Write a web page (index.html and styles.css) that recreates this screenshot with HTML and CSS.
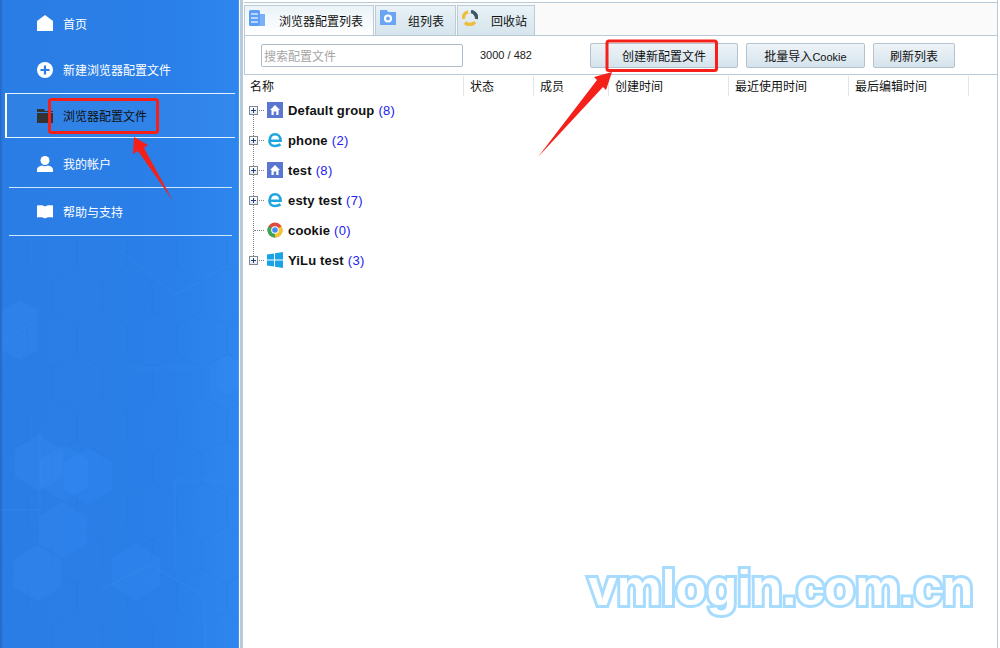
FILE: index.html
```html
<!DOCTYPE html>
<html>
<head>
    <title>VMLogin</title>
    <link rel="stylesheet" href="styles.css">
</head>
<body>
    <div id="app">
        <div id="sidebar">
            <svg class="hexes" width="239" height="648" viewBox="0 0 239 648">
                <defs>
                    <pattern id="hexgrid" width="50" height="86" patternUnits="userSpaceOnUse" patternTransform="translate(2 10)">
                        <path d="M25 0 L50 14 V43 L25 57 L0 43 V14 Z M25 57 V86 M0 43 V43 M50 43 V43" fill="none" stroke="#1c6cd0" stroke-opacity="0.2"/>
                    </pattern>
                </defs>
                <rect x="0" y="240" width="239" height="408" fill="url(#hexgrid)"/>
                <g fill="#3b93f8" fill-opacity="0.2">
                    <polygon points="64,445 88,459 88,487 64,501 40,487 40,459"/>
                    <polygon points="88,448 112,462 112,490 88,504 64,490 64,462"/>
                    <polygon points="39,435 63,449 63,477 39,491 15,477 15,449"/>
                    <polygon points="63,502 87,516 87,544 63,558 39,544 39,516"/>
                    <polygon points="38,545 62,559 62,587 38,601 14,587 14,559"/>
                    <polygon points="136,544 160,558 160,586 136,600 112,586 112,558"/>
                    <polygon points="20,300 38,310 38,350 20,360 2,350 2,310"/>
                    <polygon points="228,355 239,361 239,389 228,395 216,389 216,361"/>
                </g>
                <g fill="none" stroke="#4a9cf8" stroke-opacity="0.22">
                    <path d="M120 250 L175 295 L230 265"/>
                    <path d="M130 368 H213 V395"/>
                    <path d="M100 590 L150 565 L205 597 V648"/>
                    <path d="M175 480 H235 M175 480 V570"/>
                    <path d="M5 340 L38 320" stroke-dasharray="6 4"/>
                    <path d="M40 430 V510 H0"/>
                </g>
            </svg>
            <ul class="nav">
                <li class="nav-item">
                    <svg class="nav-icon" viewBox="0 0 16 16"><path d="M8 0 L16 6 V16 H0 V6 Z" fill="#fff"/></svg>
                    首页
                </li>
                <li class="nav-item">
                    <svg class="nav-icon" viewBox="0 0 16 16"><circle cx="8" cy="8" r="8" fill="#fff"/><path d="M8 3.500 V12.500 M3.500 8 H12.500" stroke="#2a7fe6" stroke-width="2.200"/></svg>
                    新建浏览器配置文件
                </li>
                <li class="nav-item selected">
                    <svg class="nav-icon" viewBox="0 0 16 16"><path d="M0 1 H7 L8 3 H16 V4 H0 Z M0 5 H16 V15 H0 Z" fill="#333"/></svg>
                    浏览器配置文件
                </li>
                <li class="nav-item">
                    <svg class="nav-icon" viewBox="0 0 16 16"><circle cx="8" cy="4.500" r="4.500" fill="#fff"/><path d="M0 16 V13.500 C0 11 3 10 5 9.500 C7 10.500 9 10.500 11 9.500 C13 10 16 11 16 13.500 V16 Z" fill="#fff"/></svg>
                    我的帐户
                </li>
                <li class="nav-item">
                    <svg class="nav-icon" viewBox="0 0 16 16"><path d="M0 1.500 C3 1 6 1 8 2.500 C10 1 13 1 16 1.500 V13.500 C13 13 10 13 8 14.500 C6 13 3 13 0 13.500 Z" fill="#fff"/></svg>
                    帮助与支持
                </li>
            </ul>
        </div>

        <div id="main">
            <div class="tabs">
                <div class="tab active tab-w1">
                    <svg class="tab-icon" viewBox="0 0 16 16"><rect x="0" y="0" width="11" height="16" rx="1.500" fill="#5c9df5"/><rect x="11" y="4" width="5" height="12" fill="#7ab0f7"/><path d="M2 4 H9 M2 8 H9 M2 12 H9" stroke="#d8e8fc" stroke-width="1.300"/></svg>
                    <span>浏览器配置列表</span>
                </div>
                <div class="tab tab-w2">
                    <svg class="tab-icon" viewBox="0 0 16 16"><path d="M0 0 H7 L8 2 H16 V15 H0 Z" fill="#6aa5f3"/><circle cx="8" cy="8.500" r="3" fill="none" stroke="#fff" stroke-width="2.200"/></svg>
                    <span>组列表</span>
                </div>
                <div class="tab tab-w3">
                    <svg class="tab-icon" viewBox="0 0 16 16"><path d="M9 1.500 A6.500 6.500 0 0 1 14.500 9" fill="none" stroke="#3c5560" stroke-width="3.500"/><path d="M13 12 A6.500 6.500 0 0 1 3 12.500" fill="none" stroke="#eebd3c" stroke-width="3.500"/><path d="M1.500 9 A6.500 6.500 0 0 1 6 1.800" fill="none" stroke="#eebd3c" stroke-width="3.500"/></svg>
                    <span>回收站</span>
                </div>
            </div>

            <div class="toolbar">
                <input class="search" type="text" placeholder="搜索配置文件">
                <span class="count">3000 / 482</span>
                <button class="btn btn-create">创建新配置文件</button>
                <button class="btn btn-import">批量导入<span class="latin">Cookie</span></button>
                <button class="btn btn-refresh">刷新列表</button>
            </div>

            <div class="table-head">
                <div class="col col-name">名称</div>
                <div class="col col-status">状态</div>
                <div class="col col-member">成员</div>
                <div class="col col-time">创建时间</div>
                <div class="col col-time">最近使用时间</div>
                <div class="col col-time">最后编辑时间</div>
            </div>

            <div class="tree">
                <div class="row">
                    <span class="expander"></span>
                    <svg class="row-icon" viewBox="0 0 16 16"><rect width="16" height="16" fill="#5a77d0"/><path d="M8 3 L13 8 H11.500 V13 H9.300 V9.500 H6.700 V13 H4.500 V8 H3 Z" fill="#fff"/></svg>
                    <b>Default group</b><span class="num">(8)</span>
                </div>
                <div class="row">
                    <span class="expander"></span>
                    <svg class="row-icon" viewBox="0 0 16 16"><path d="M2.500 8.700 H13.600 C13.600 4.500 11 2.200 8 2.200 C5 2.200 2.800 4.500 2.500 8.700 C2.300 12 4.500 14 8 14 C10 14 12 13.400 13.500 12.400" fill="none" stroke="#1ea6e0" stroke-width="2.600"/></svg>
                    <b>phone</b><span class="num">(2)</span>
                </div>
                <div class="row">
                    <span class="expander"></span>
                    <svg class="row-icon" viewBox="0 0 16 16"><rect width="16" height="16" fill="#5a77d0"/><path d="M8 3 L13 8 H11.500 V13 H9.300 V9.500 H6.700 V13 H4.500 V8 H3 Z" fill="#fff"/></svg>
                    <b>test</b><span class="num">(8)</span>
                </div>
                <div class="row">
                    <span class="expander"></span>
                    <svg class="row-icon" viewBox="0 0 16 16"><path d="M2.500 8.700 H13.600 C13.600 4.500 11 2.200 8 2.200 C5 2.200 2.800 4.500 2.500 8.700 C2.300 12 4.500 14 8 14 C10 14 12 13.400 13.500 12.400" fill="none" stroke="#1ea6e0" stroke-width="2.600"/></svg>
                    <b>esty test</b><span class="num">(7)</span>
                </div>
                <div class="row">
                    <span class="no-expander"></span>
                    <svg class="row-icon" viewBox="0 0 16 16"><circle cx="8" cy="8" r="7.500" fill="#dd4b3e"/><path d="M8 8 L14.500 4.200 A7.500 7.500 0 0 1 8 15.500 Z" fill="#f5c431"/><path d="M8 8 L8 15.500 A7.500 7.500 0 0 1 1.500 4.200 Z" fill="#3aa757"/><circle cx="8" cy="8" r="3.800" fill="#fff"/><circle cx="8" cy="8" r="2.800" fill="#4a8af4"/></svg>
                    <b>cookie</b><span class="num">(0)</span>
                </div>
                <div class="row">
                    <span class="expander"></span>
                    <svg class="row-icon" viewBox="0 0 16 16"><path d="M0 2.500 L7 1.500 V7.500 H0 Z M8 1.300 L16 0 V7.500 H8 Z M0 8.500 H7 V14.500 L0 13.500 Z M8 8.500 H16 V16 L8 14.700 Z" fill="#18a3e4"/></svg>
                    <b>YiLu test</b><span class="num">(3)</span>
                </div>
            </div>

            <div class="watermark">vmlogin.com.cn</div>
        </div>
    </div>

    <svg class="marks" width="1000" height="648" viewBox="0 0 1000 648">
        <rect x="49.500" y="99.500" width="108" height="33" rx="2" fill="none" stroke="#f5201a" stroke-width="3"/>
        <rect x="607" y="41" width="109.500" height="29.500" rx="2" fill="none" stroke="#f5201a" stroke-width="3"/>
        <polygon points="134,137 148,145 144,148 173,201 138,151 133,154" fill="#f5201a"/>
        <polygon points="612,72 606,90 603,87 538,157 597,80 594,77" fill="#f5201a"/>
    </svg>
</body>
</html>
```

FILE: styles.css
```css
html, body {
    margin: 0;
    padding: 0;
    height: 100%;
    overflow: hidden;
}

body {
    font-family: "Noto Sans CJK SC", "Liberation Sans", sans-serif;
    font-size: 12px;
    color: #111;
    background: #fff;
}

#app {
    display: flex;
    height: 648px;
}

/* left menu */
#sidebar {
    position: relative;
    width: 239px;
    flex-shrink: 0;
    box-sizing: border-box;
    padding-left: 9px;
    background: linear-gradient(90deg, #2168c4 0, #2a7de4 3px, #2a7fe8 70%, #2d86ee 100%);
    border-right: 1px solid #3a96f5;
    color: #fff;
}

.hexes {
    position: absolute;
    left: 0;
    top: 0;
}

.nav {
    position: relative;
    list-style: none;
    margin: 0;
    padding: 0;
    width: 223px;
}

.nav-item {
    display: flex;
    align-items: center;
    gap: 10px;
    height: 47px;
    padding-left: 28px;
    border-bottom: 1px solid #cfe6ff;
}

.nav-item:nth-child(1) {
    height: 46px;
    border-bottom: none;
}

.nav-item:nth-child(2) {
    border-bottom: none;
}

.nav-icon {
    width: 16px;
    height: 16px;
}

.nav-item.selected {
    height: 43px;
    margin-left: -4px;
    margin-right: -3px;
    margin-bottom: 2px;
    padding-left: 30px;
    color: #111;
    background: rgba(255, 255, 255, 0.03);
    border-top: 1px solid #e4f1ff;
    border-bottom: 1px solid #e4f1ff;
    border-left: 2px solid #fff;
}

/* right part */
#main {
    position: relative;
    flex: 1;
    margin-right: 2px;
    padding: 2px 0 0 4px;
    background: #fff;
    border-left: 1px solid #fff;
    border-right: 1px solid #b8cad8;
    box-shadow: inset 3px 0 0 #b8cad8;
    overflow: hidden;
}

.tabs {
    display: flex;
    height: 33px;
    box-sizing: border-box;
    padding-top: 2px;
    gap: 1px;
    background: #fafafa;
    border-top: 1px solid #b8cad8;
}

.tab {
    display: flex;
    align-items: center;
    box-sizing: border-box;
    height: 30px;
    padding-left: 4px;
    background: linear-gradient(#e8f2f7, #d6e4ec);
    border: 1px solid #bccbd6;
    border-bottom: none;
}

.tab.active {
    background: linear-gradient(#eaf3f8, #ffffff);
}

.tab-w1 {
    width: 130px;
}

.tab-w2 {
    width: 81px;
}

.tab-w3 {
    width: 78px;
}

.tab-icon {
    width: 16px;
    height: 16px;
    margin-top: -6px;
    flex-shrink: 0;
}

.tab span {
    margin-left: 13px;
}

.tab-w1 span {
    margin-left: 14px;
}

.tab-w2 span {
    margin-left: 12px;
}

.toolbar {
    display: flex;
    align-items: center;
    height: 40px;
    box-sizing: border-box;
    padding-left: 16px;
    border: 1px solid #b8cad8;
    border-right: none;
}

.search {
    box-sizing: border-box;
    width: 202px;
    height: 23px;
    padding: 0 2px;
    font: inherit;
    border: 1px solid #aebdc9;
    border-radius: 2px;
    background: #fff;
}

.search::placeholder {
    color: #a5a5a5;
}

.count {
    margin-left: 17px;
    width: 110px;
    font-family: "Liberation Sans", sans-serif;
    font-size: 11px;
    color: #222;
}

.btn {
    box-sizing: border-box;
    height: 25px;
    padding: 0;
    font: inherit;
    color: #111;
    background: linear-gradient(#eef4f8, #d5e3ec);
    border: 1px solid #b3c2cd;
    border-radius: 2px;
}

.btn-create {
    width: 148px;
}

.btn-import {
    width: 119px;
    margin-left: 8px;
}

.btn-refresh {
    width: 82px;
    margin-left: 8px;
}

.latin {
    font-family: "Liberation Sans", sans-serif;
    font-size: 11px;
}

.table-head {
    display: grid;
    grid-template-columns: 220px 70px 75px 120px 120px 120px;
    height: 19px;
    margin-top: 1px;
}

.col {
    padding-left: 6px;
    line-height: 20px;
    border-right: 1px solid #e2e6ea;
    box-sizing: border-box;
    white-space: nowrap;
}

.tree {
    position: relative;
}

.tree::before {
    content: "";
    position: absolute;
    left: 9px;
    top: 15px;
    height: 150px;
    border-left: 1px dotted #808080;
}

.row {
    position: relative;
    display: flex;
    align-items: center;
    height: 30px;
    font-family: "Liberation Sans", sans-serif;
    font-size: 13px;
    white-space: pre;
}

.expander {
    position: relative;
    z-index: 1;
    box-sizing: border-box;
    width: 9px;
    height: 9px;
    margin-left: 5px;
    border: 1px solid #808890;
    background: linear-gradient(#fff, #e4e8ec);
}

.expander::before {
    content: "";
    position: absolute;
    left: 1px;
    top: 3px;
    width: 5px;
    height: 1px;
    background: #223a80;
}

.expander::after {
    content: "";
    position: absolute;
    left: 3px;
    top: 1px;
    width: 1px;
    height: 5px;
    background: #223a80;
}

.no-expander {
    width: 9px;
    margin-left: 5px;
}

.row::before {
    content: "";
    position: absolute;
    left: 10px;
    top: 15px;
    width: 10px;
    border-top: 1px dotted #808080;
}

.row-icon {
    width: 16px;
    height: 16px;
    margin-left: 9px;
    margin-right: 5px;
}

.row b {
    font-weight: bold;
    letter-spacing: 0.15px;
}

.num {
    margin-left: 4px;
    color: #2222ee;
    letter-spacing: 0.3px;
}

.watermark {
    position: absolute;
    right: 24px;
    top: 560px;
    font-family: "Liberation Sans", sans-serif;
    font-weight: bold;
    font-size: 50.5px;
    line-height: 56px;
    color: #fff;
    -webkit-text-stroke: 6px #a8dcff;
    paint-order: stroke fill;
}

/* red annotations over the screenshot */
.marks {
    position: absolute;
    left: 0;
    top: 0;
    pointer-events: none;
}
```
